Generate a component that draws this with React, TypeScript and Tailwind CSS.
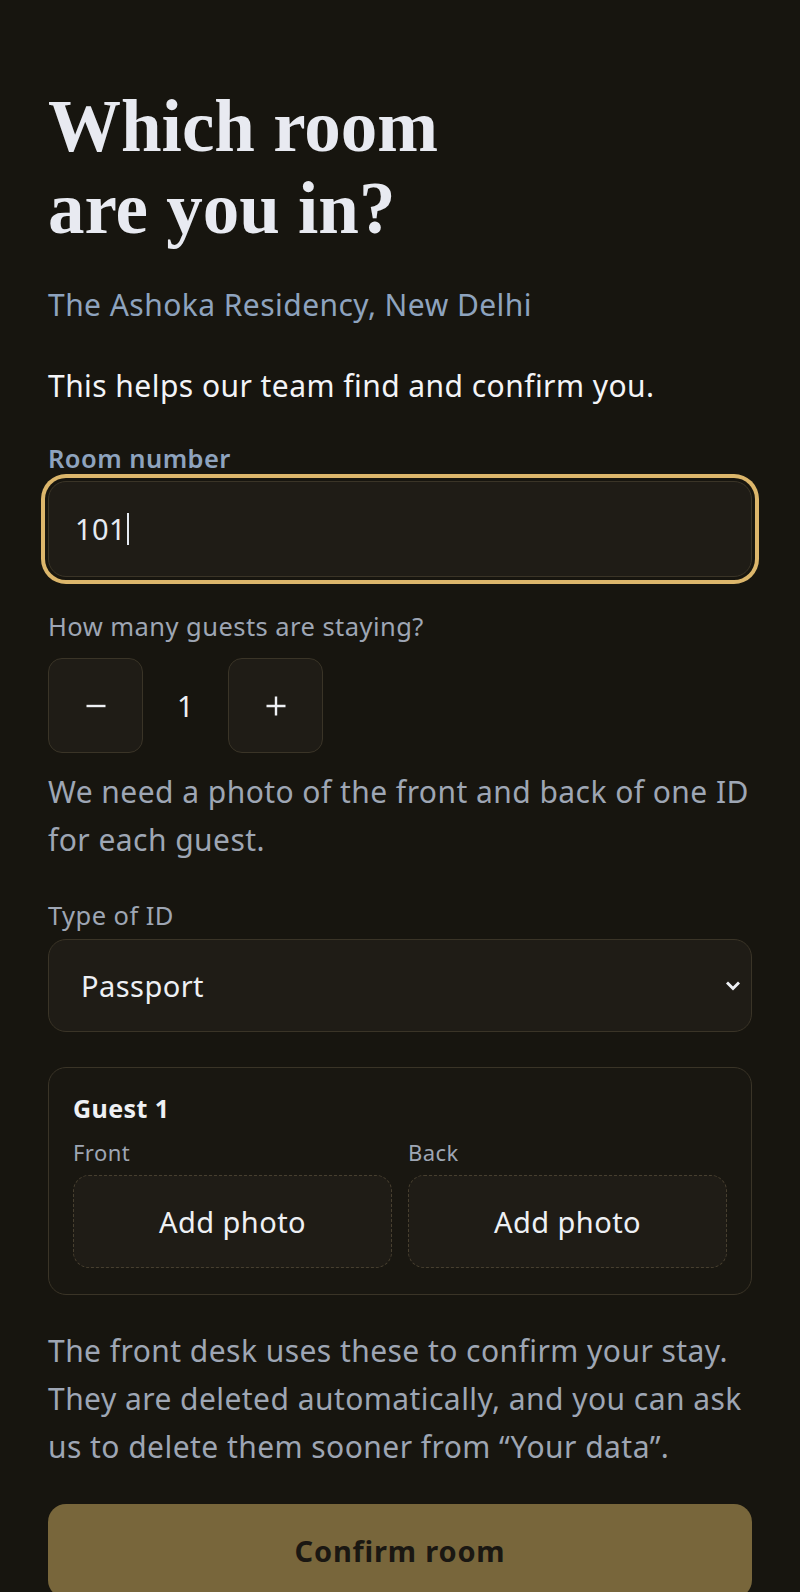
import React from "react";

export default function App() {
  return (
    <div className="min-h-screen w-full bg-[#17150f] font-['Noto_Sans',sans-serif] tracking-[0.028em] px-[48px] pt-[86px] pb-[40px]">
      <h1 className="font-['Liberation_Serif',serif] font-bold text-[73px] leading-[82px] text-[#e8eaf1] tracking-normal">
        Which room
        <br />
        are you in?
      </h1>

      <p className="mt-[35px] text-[30px] leading-[40px] text-[#8ea3be]">
        The Ashoka Residency, New Delhi
      </p>

      <p className="mt-[41px] text-[30px] leading-[40px] text-[#f3f4f7]">
        This helps our team find and confirm you.
      </p>

      <div className="mt-[36px] text-[25.5px] leading-[32px] font-semibold text-[#8ea3be]">
        Room number
      </div>

      <div className="mt-[7px] h-[96px] rounded-[18px] border border-[#3a3427] bg-[#1f1c16] ring-4 ring-[#dcb66b] ring-offset-[3px] ring-offset-[#17150f] flex items-center pl-[26px]">
        <span className="text-[29px] text-[#e6ebf2]">101</span>
        <span className="ml-[1px] w-[1.5px] h-[32px] bg-[#e6ebf2]" />
      </div>

      <div className="mt-[33px] text-[25.5px] leading-[32px] text-[#9ea6b4]">
        How many guests are staying?
      </div>

      <div className="mt-[16px] flex items-center">
        <button className="w-[95px] h-[95px] rounded-[14px] border border-[#3a3427] bg-[#1f1c16] flex items-center justify-center">
          <svg width="20" height="20" viewBox="0 0 20 20" fill="none">
            <path d="M0.5 10 H19.5" stroke="#eef0f4" strokeWidth="2.4" />
          </svg>
        </button>
        <span className="w-[85px] text-center text-[29px] text-[#eef0f4]">1</span>
        <button className="w-[95px] h-[95px] rounded-[14px] border border-[#3a3427] bg-[#1f1c16] flex items-center justify-center">
          <svg width="20" height="20" viewBox="0 0 20 20" fill="none">
            <path d="M0.5 10 H19.5 M10 0.5 V19.5" stroke="#eef0f4" strokeWidth="2.4" />
          </svg>
        </button>
      </div>

      <p className="mt-[15px] text-[30px] leading-[48px] text-[#9ea6b4]">
        We need a photo of the front and back of one ID for each guest.
      </p>

      <div className="mt-[35px] text-[25.5px] leading-[32px] text-[#9ea6b4]">Type of ID</div>

      <div className="relative mt-[8px] h-[93px] rounded-[18px] border border-[#3a3427] bg-[#1f1c16] flex items-center pl-[32px]">
        <span className="text-[29px] text-[#eef0f4]">Passport</span>
        <svg
          className="absolute right-[11px] top-1/2 -translate-y-1/2"
          width="14"
          height="10"
          viewBox="0 0 14 10"
          fill="none"
        >
          <path d="M2 2.5 L7 7.5 L12 2.5" stroke="#eef0f4" strokeWidth="3" strokeLinecap="square" />
        </svg>
      </div>

      <div className="mt-[35px] rounded-[18px] border border-[#3a3427] bg-[#191711] px-[24px] pt-[23px] pb-[26px]">
        <div className="text-[25px] leading-[34px] font-bold text-[#eef0f4]">Guest 1</div>
        <div className="mt-[13px] grid grid-cols-2 gap-x-[16px]">
          <div>
            <div className="text-[22px] leading-[28px] text-[#9ea6b4]">Front</div>
            <div className="mt-[9px] h-[93px] rounded-[16px] border border-dashed border-[#473f2f] bg-[#1f1c16] flex items-center justify-center text-[29px] text-[#eef0f4]">
              Add photo
            </div>
          </div>
          <div>
            <div className="text-[22px] leading-[28px] text-[#9ea6b4]">Back</div>
            <div className="mt-[9px] h-[93px] rounded-[16px] border border-dashed border-[#473f2f] bg-[#1f1c16] flex items-center justify-center text-[29px] text-[#eef0f4]">
              Add photo
            </div>
          </div>
        </div>
      </div>

      <p className="mt-[32px] text-[30px] leading-[48px] text-[#9ea6b4]">
        The front desk uses these to confirm your stay. They are deleted automatically, and you can ask us to delete them sooner from “Your data”.
      </p>

      <button className="mt-[33px] w-full h-[94px] rounded-[18px] bg-[#78663b] text-[29px] font-bold tracking-[0.028em] text-[#1a1712]">
        Confirm room
      </button>
    </div>
  );
}
